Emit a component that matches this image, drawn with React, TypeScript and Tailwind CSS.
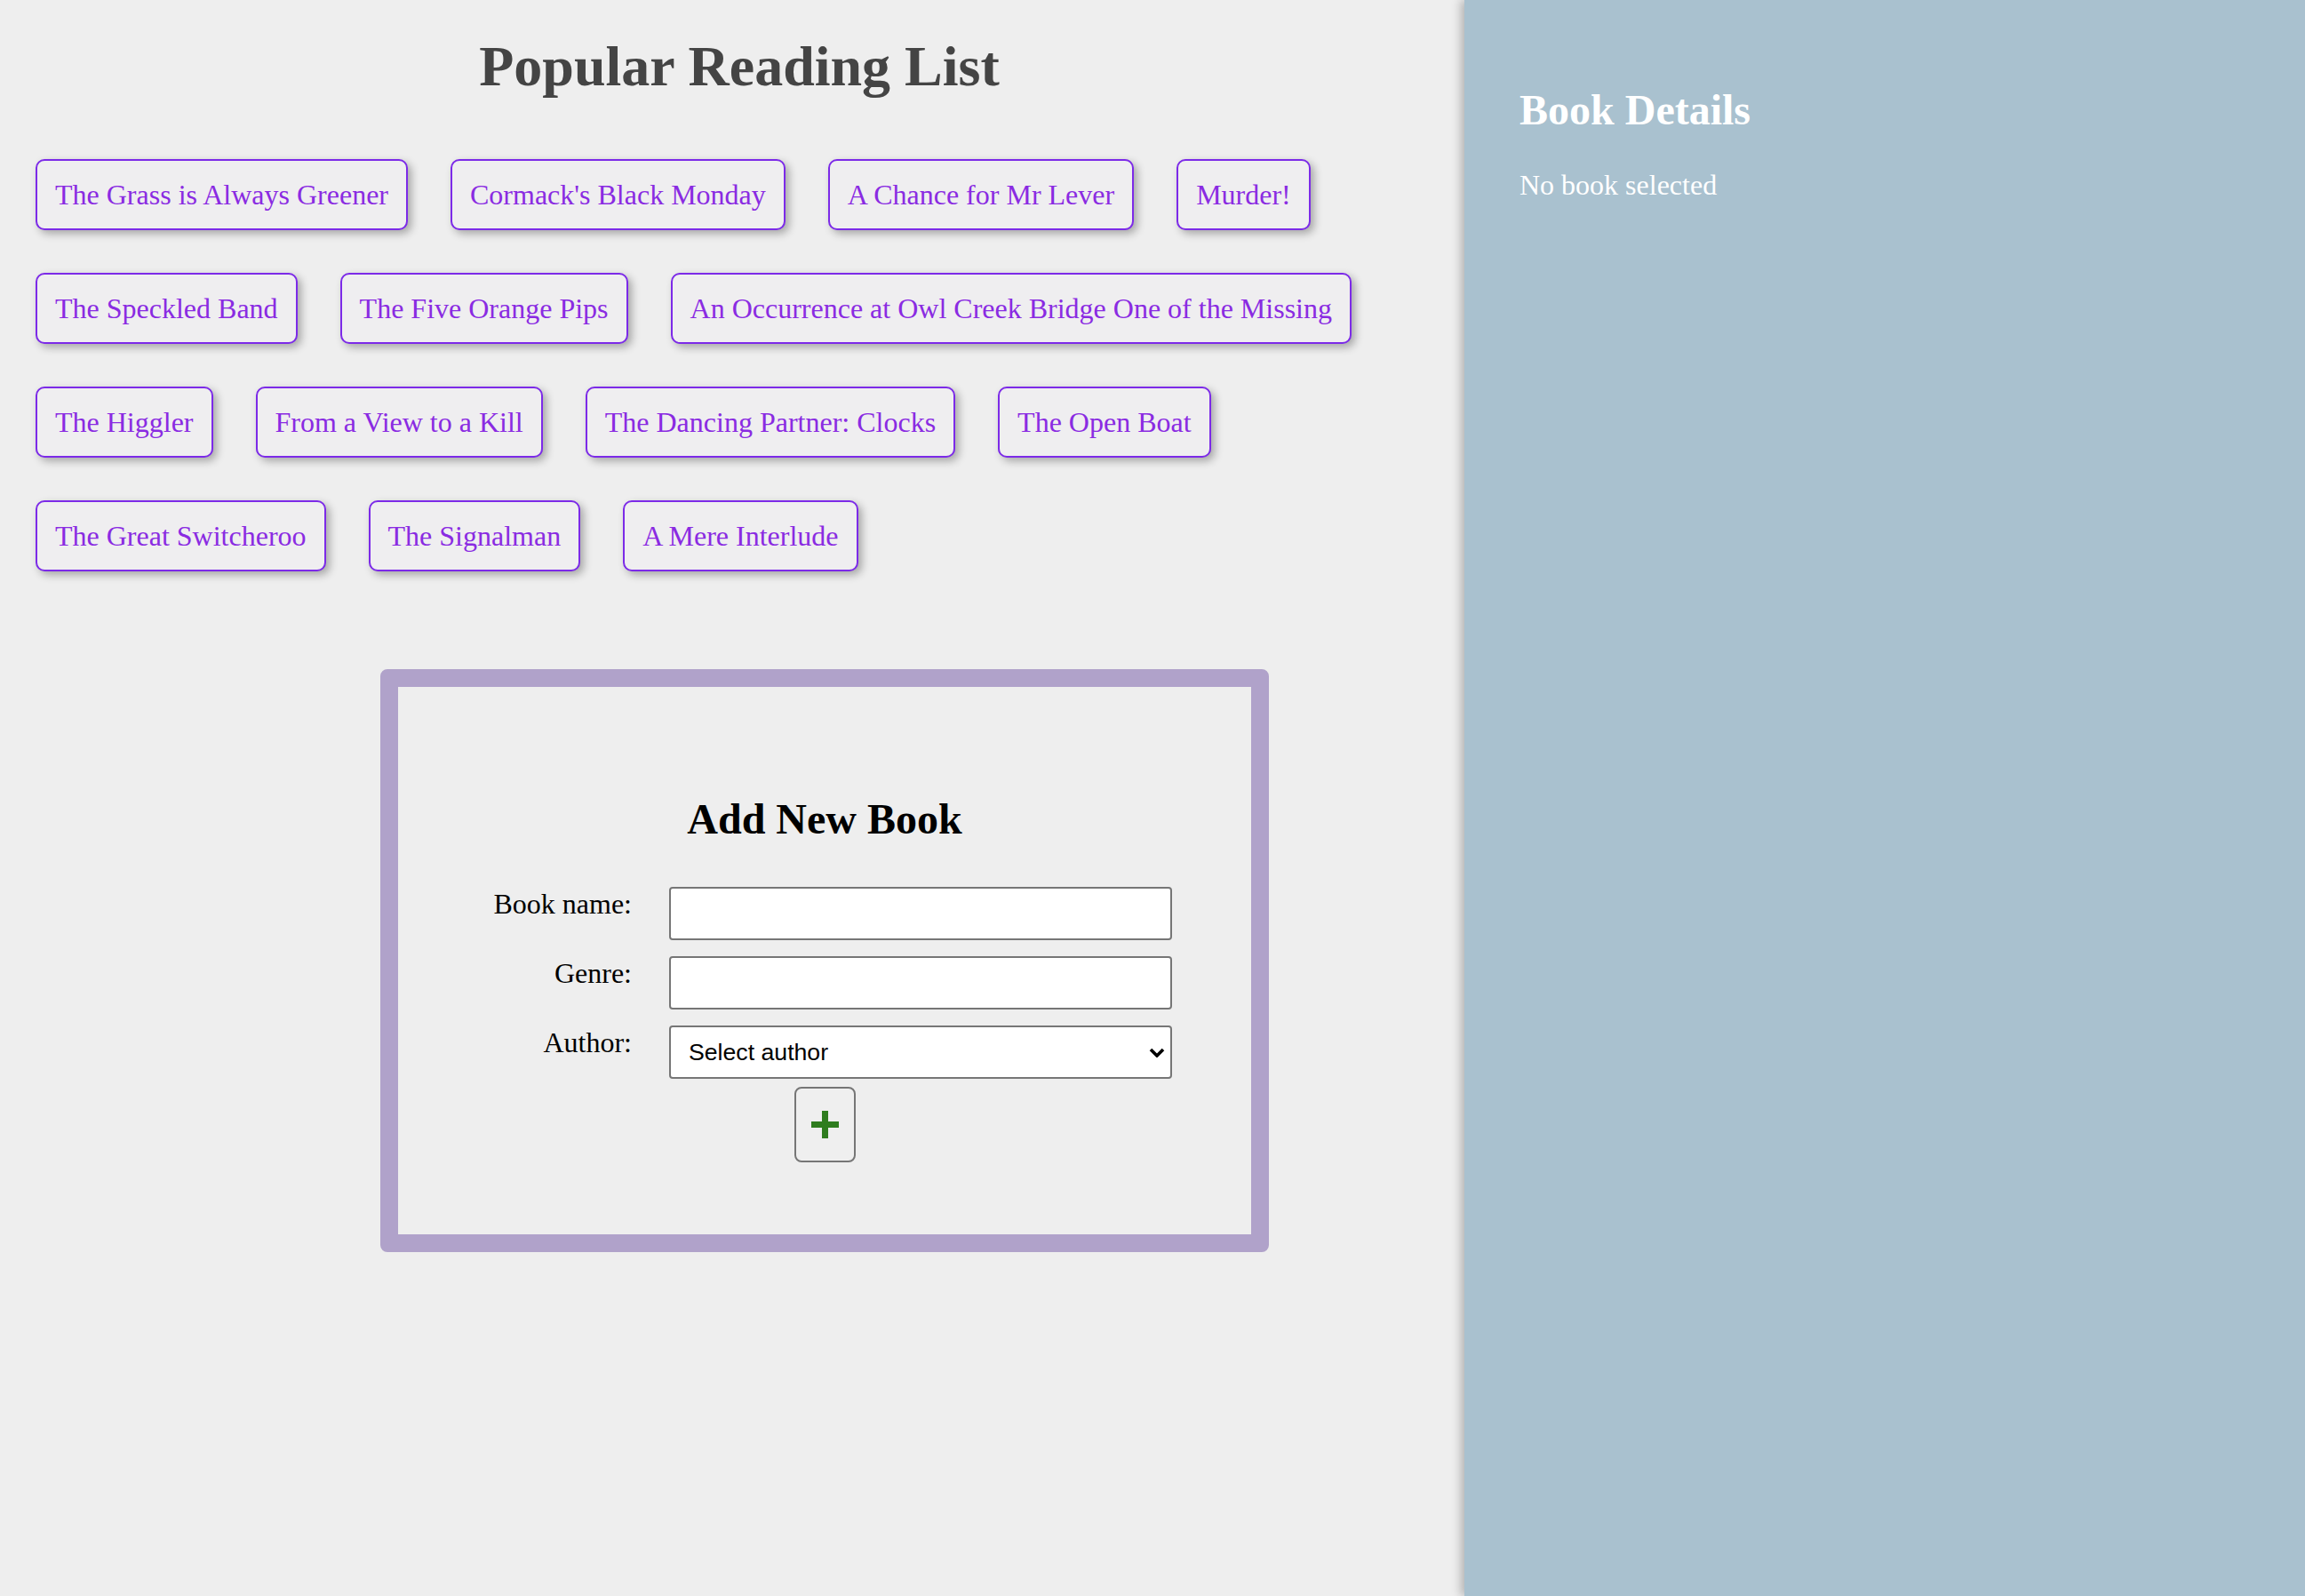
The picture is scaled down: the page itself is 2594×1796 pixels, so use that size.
import { useState } from "react";

const books = [
  "The Grass is Always Greener",
  "Cormack's Black Monday",
  "A Chance for Mr Lever",
  "Murder!",
  "The Speckled Band",
  "The Five Orange Pips",
  "An Occurrence at Owl Creek Bridge One of the Missing",
  "The Higgler",
  "From a View to a Kill",
  "The Dancing Partner: Clocks",
  "The Open Boat",
  "The Great Switcheroo",
  "The Signalman",
  "A Mere Interlude",
];

const serif = { fontFamily: '"Liberation Serif", "Times New Roman", serif' };

export default function App() {
  const [selected, setSelected] = useState<string | null>(null);

  return (
    <div className="flex min-h-[1796px] w-full bg-[#eeeeee]" style={serif}>
      {/* list + form */}
      <div className="flex-1 pl-[16px] pt-[39px]">
        <h1 className="text-center text-[64px] font-bold leading-[71px] text-[#444444]">
          Popular Reading List
        </h1>

        <ul className="mt-[45px] flex flex-wrap pr-[16px]">
          {books.map((b) => (
            <li key={b}>
              <button
                onClick={() => setSelected(b)}
                className="m-[24px] rounded-[10px] border-2 border-[#7c2ae8] bg-[#efeef0] px-[20px] py-[20px] text-[32px] leading-[36px] text-[#8a2be2] shadow-[4px_4px_10px_rgba(0,0,0,0.3)]"
              >
                {b}
              </button>
            </li>
          ))}
        </ul>

        <div className="ml-[412px] mt-[86px] w-[1000px] rounded-[8px] border-[20px] border-[#b0a2ca] bg-[#eeeeee] pb-[81px] pt-[122px]">
          <h2 className="text-center text-[48px] font-bold leading-[53px] text-black">
            Add New Book
          </h2>

          <div className="mt-[50px] flex flex-col gap-[18px]">
            <div className="flex items-start gap-[42px]">
              <label className="mt-[2px] w-[263px] text-right text-[32px] leading-[35px] text-black">
                Book name:
              </label>
              <input
                type="text"
                className="h-[60px] w-[566px] rounded-[4px] border-2 border-[#767676] bg-white"
              />
            </div>
            <div className="flex items-start gap-[42px]">
              <label className="mt-[2px] w-[263px] text-right text-[32px] leading-[35px] text-black">
                Genre:
              </label>
              <input
                type="text"
                className="h-[60px] w-[566px] rounded-[4px] border-2 border-[#767676] bg-white"
              />
            </div>
            <div className="flex items-start gap-[42px]">
              <label className="mt-[2px] w-[263px] text-right text-[32px] leading-[35px] text-black">
                Author:
              </label>
              <div className="relative">
                <select
                  className="h-[60px] w-[566px] appearance-none rounded-[4px] border-2 border-[#767676] bg-white pl-[20px] text-[26.67px] text-black"
                  style={{ fontFamily: '"Liberation Sans", Arial, sans-serif' }}
                  defaultValue=""
                >
                  <option value="">Select author</option>
                </select>
                <svg
                  className="pointer-events-none absolute right-[8px] top-[25px]"
                  width="18"
                  height="11"
                  viewBox="0 0 18 11"
                >
                  <path d="M2 2 L9 9 L16 2" fill="none" stroke="#000" strokeWidth="3.6" />
                </svg>
              </div>
            </div>
          </div>

          <button className="mx-auto mt-[9px] flex h-[85px] w-[69px] items-center justify-center rounded-[8px] border-2 border-[#767676] bg-[#efefef]">
            <svg width="31" height="31" viewBox="0 0 31 31">
              <rect x="12" y="0" width="7" height="31" fill="#2f7d1f" />
              <rect x="0" y="12" width="31" height="7" fill="#2f7d1f" />
            </svg>
          </button>
        </div>
      </div>

      {/* details sidebar */}
      <aside className="w-[946px] shrink-0 bg-[#a9c1cf] pl-[62px] pt-[97px] text-white shadow-[-4px_0_10px_rgba(0,0,0,0.25)]">
        <h2 className="text-[48px] font-bold leading-[53px]">Book Details</h2>
        <p className="mt-[41px] text-[32px] leading-[35px]">
          {selected ?? "No book selected"}
        </p>
      </aside>
    </div>
  );
}
